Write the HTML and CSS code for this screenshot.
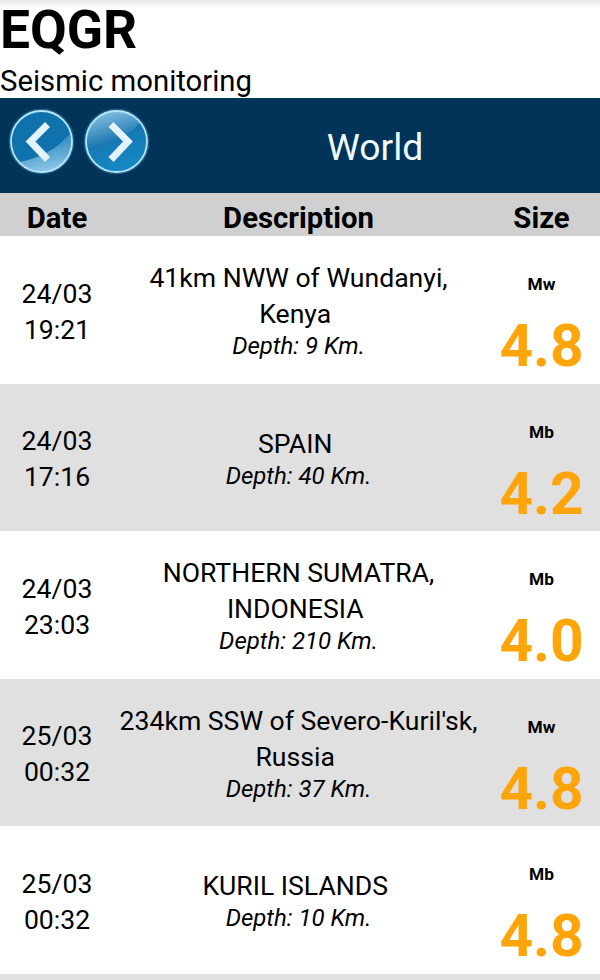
FILE: index.html
```
<!DOCTYPE html>
<html lang="en">
<head>
    <meta charset="UTF-8">
    <meta name="viewport" content="width=device-width, initial-scale=1.0">
    <title>EQGR</title>
    <link rel="stylesheet" href="styles.css">
</head>
<body>
    <header class="page-header">
        <h1>EQGR</h1>
        <p>Seismic monitoring</p>
    </header>
    <nav class="navbar">
        <div class="nav-buttons">
            <a class="nav-button" href="#" aria-label="Previous">
                <svg viewBox="0 0 66 66">
                    <defs>
                        <linearGradient id="prev-base" x1="0" y1="0" x2="0.3" y2="1">
                            <stop offset="0" stop-color="#1070aa"/>
                            <stop offset="1" stop-color="#0f74b0"/>
                        </linearGradient>
                        <linearGradient id="prev-shine" x1="0.4" y1="0.1" x2="0.6" y2="1">
                            <stop offset="0" stop-color="#2585bd"/>
                            <stop offset="1" stop-color="#94c9e9"/>
                        </linearGradient>
                    </defs>
                    <circle class="ring-glow" cx="32.5" cy="32.5" r="30.5"/>
                    <circle cx="32.5" cy="32.5" r="30.5" fill="url(#prev-base)"/>
                    <path d="M10 53 C27 50 48 42 62 23 A30.5 30.5 0 0 1 10 53 Z" fill="url(#prev-shine)"/>
                    <circle class="ring" cx="32.5" cy="32.5" r="30.5"/>
                    <path class="arrow" d="M38.5 15.5 L21.5 32.5 L38.5 50.5"/>
                </svg>
            </a>
            <a class="nav-button" href="#" aria-label="Next">
                <svg viewBox="0 0 66 66">
                    <defs>
                        <linearGradient id="next-base" x1="0" y1="0" x2="0.3" y2="1">
                            <stop offset="0" stop-color="#0f6aa5"/>
                            <stop offset="1" stop-color="#1787c2"/>
                        </linearGradient>
                        <linearGradient id="next-shine" x1="0.2" y1="0" x2="0.6" y2="1">
                            <stop offset="0" stop-color="#8fc8e8"/>
                            <stop offset="0.8" stop-color="#1a75af"/>
                        </linearGradient>
                    </defs>
                    <circle class="ring-glow" cx="32.5" cy="32.5" r="30.5"/>
                    <circle cx="32.5" cy="32.5" r="30.5" fill="url(#next-base)"/>
                    <path d="M3 41 C18 38 44 30 56 13 A30.5 30.5 0 0 0 3 41 Z" fill="url(#next-shine)"/>
                    <circle class="ring" cx="32.5" cy="32.5" r="30.5"/>
                    <path class="arrow" d="M27 15.5 L44 32.5 L27 50.5"/>
                </svg>
            </a>
        </div>
        <div class="nav-title">World</div>
    </nav>
    <div class="list">
        <div class="row row-head">
            <div>Date</div>
            <div>Description</div>
            <div>Size</div>
        </div>
        <div class="row">
            <div class="date">24/03<br>19:21</div>
            <div class="description">41km NWW of Wundanyi,<br>Kenya&nbsp;<em>Depth: 9 Km.</em></div>
            <div class="size"><span>Mw</span><strong>4.8</strong></div>
        </div>
        <div class="row row-alt">
            <div class="date">24/03<br>17:16</div>
            <div class="description">SPAIN&nbsp;<em>Depth: 40 Km.</em></div>
            <div class="size"><span>Mb</span><strong>4.2</strong></div>
        </div>
        <div class="row">
            <div class="date">24/03<br>23:03</div>
            <div class="description">NORTHERN SUMATRA,<br>INDONESIA&nbsp;<em>Depth: 210 Km.</em></div>
            <div class="size"><span>Mb</span><strong>4.0</strong></div>
        </div>
        <div class="row row-alt">
            <div class="date">25/03<br>00:32</div>
            <div class="description">234km SSW of Severo-Kuril'sk,<br>Russia&nbsp;<em>Depth: 37 Km.</em></div>
            <div class="size"><span>Mw</span><strong>4.8</strong></div>
        </div>
        <div class="row">
            <div class="date">25/03<br>00:32</div>
            <div class="description">KURIL ISLANDS&nbsp;<em>Depth: 10 Km.</em></div>
            <div class="size"><span>Mb</span><strong>4.8</strong></div>
        </div>
        <div class="row-end"></div>
    </div>
</body>
</html>
```
FILE: styles.css
```
body {
    margin: 0;
    font-family: Roboto, "Liberation Sans", sans-serif;
    background-color: #ffffff;
    color: #000000;
}

.page-header {
    box-sizing: border-box;
    height: 98px;
    background: linear-gradient(#e6e6e6, #ffffff 8px);
}

h1 {
    margin: 0;
    font-size: 53.3px;
    line-height: 60px;
}

.page-header p {
    margin: 0;
    padding-top: 4px;
    font-size: 29.3px;
    line-height: 34px;
}

.navbar {
    display: grid;
    grid-template-columns: 150px 1fr;
    height: 95px;
    background-color: #003459;
}

.nav-buttons {
    display: flex;
    gap: 9px;
    padding: 11px 0 0 9px;
}

.nav-button,
.nav-button svg {
    display: block;
    width: 66px;
    height: 66px;
    overflow: visible;
}

.ring {
    fill: none;
    stroke: #b5e5f9;
    stroke-width: 1.8;
}

.ring-glow {
    fill: none;
    stroke: #4da3cf;
    stroke-opacity: 0.35;
    stroke-width: 5;
}

.arrow {
    fill: none;
    stroke: #e3f3fc;
    stroke-width: 7;
}

.nav-title {
    color: #f0faff;
    font-size: 37.3px;
    line-height: 99px;
    text-align: center;
}

.row {
    display: grid;
    grid-template-columns: 114px 369px 1fr;
    align-items: center;
    box-sizing: border-box;
    height: 147.5px;
    text-align: center;
    font-size: 26.6px;
    line-height: 36px;
}

.row-head {
    height: 43px;
    padding-top: 6px;
    background-color: #d0d0d0;
    font-size: 29.3px;
    font-weight: bold;
}

.row-alt {
    background-color: #e0e0e0;
}

.row-end {
    height: 6.5px;
    background-color: #e0e0e0;
}

.date {
    padding-top: 4px;
}

.description {
    padding-top: 2px;
}

.description em {
    display: block;
    font-size: 24px;
    line-height: 29px;
}

.size span {
    display: block;
    padding-top: 36px;
    font-size: 17.3px;
    font-weight: bold;
    line-height: 20px;
}

.size strong {
    display: block;
    padding-top: 17px;
    color: #ffa50a;
    font-size: 58.6px;
    line-height: 70px;
}
```
